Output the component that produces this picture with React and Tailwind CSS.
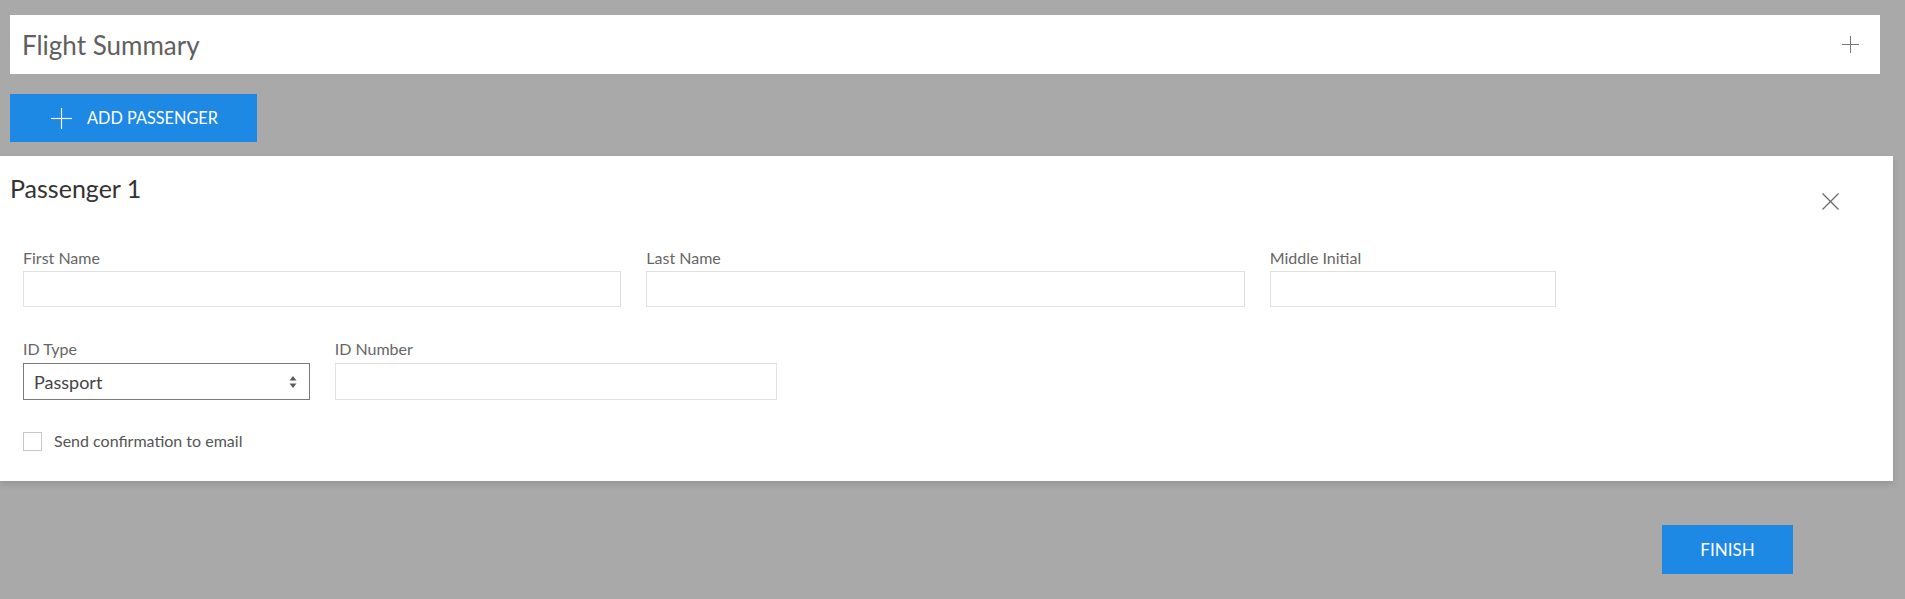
import React from "react";

function PlusIcon({ className, stroke = "currentColor", width = 1.2 }) {
  return (
    <svg viewBox="0 0 20 20" className={className} fill="none" stroke={stroke} strokeWidth={width}>
      <line x1="10" y1="0" x2="10" y2="20" />
      <line x1="0" y1="10" x2="20" y2="10" />
    </svg>
  );
}

function Field({ label, span, h = "h-[36px]" }) {
  return (
    <div className={span}>
      <div className="text-[16px] leading-[20px] text-[#666] mb-[3px]">{label}</div>
      <input
        type="text"
        className={`block w-full ${h} border border-[#e1e1e1] bg-white outline-none`}
      />
    </div>
  );
}

export default function App() {
  return (
    <div
      className="min-h-[599px] w-full bg-[#a9a9a9] pt-[15px]"
      style={{ fontFamily: "Lato, 'Open Sans', sans-serif" }}
    >
      <div className="ml-[10px] mr-[25px]">
        <div className="flex h-[59px] items-center justify-between bg-white pl-[12px] pr-[21px]">
          <span className="pt-[2px] text-[26px] leading-[31px] text-[#5f5f5f]">Flight Summary</span>
          <PlusIcon className="h-[17px] w-[17px] text-[#777]" />
        </div>
        <button className="mt-[20px] flex h-[48px] w-[247px] items-center gap-[15px] bg-[#1e88e5] pl-[41px] text-white">
          <PlusIcon className="h-[21px] w-[21px]" width={1.1} />
          <span className="text-[16.3px] leading-[20px]">ADD PASSENGER</span>
        </button>
      </div>

      <div className="mr-[12px] mt-[14px] bg-white pb-[30px] shadow-[0_3px_6px_rgba(0,0,0,0.12)]">
        <div className="flex items-start justify-between pl-[10px] pr-[54px] pt-[17px]">
          <span className="text-[25px] leading-[30px] text-[#333]">Passenger 1</span>
          <svg viewBox="0 0 17 17" className="mt-[20px] h-[17px] w-[17px]" fill="none" stroke="#6b6b6b" strokeWidth="1.2">
            <line x1="0.5" y1="0.5" x2="16.5" y2="16.5" />
            <line x1="16.5" y1="0.5" x2="0.5" y2="16.5" />
          </svg>
        </div>

        <div className="mt-[38px] pl-[23px] pr-[25px]">
          <div className="grid grid-cols-12 gap-x-[25px]">
            <Field label="First Name" span="col-span-4" />
            <Field label="Last Name" span="col-span-4" />
            <Field label="Middle Initial" span="col-span-2" />
          </div>

          <div className="mt-[32px] grid grid-cols-12 gap-x-[25px]">
            <div className="col-span-2">
              <div className="text-[16px] leading-[20px] text-[#666] mb-[4px]">ID Type</div>
              <div className="flex h-[37px] items-center justify-between border border-[#7a7a7a] bg-white pl-[10px] pr-[12px]">
                <span className="text-[18px] leading-[22px] text-[#444]">Passport</span>
                <svg viewBox="0 0 8 12" className="h-[12px] w-[8px]" fill="#5a5a5a">
                  <polygon points="4,0 7.5,4.5 0.5,4.5" />
                  <polygon points="0.5,7.5 7.5,7.5 4,12" />
                </svg>
              </div>
            </div>
            <div className="col-span-3">
              <div className="text-[16px] leading-[20px] text-[#666] mb-[4px]">ID Number</div>
              <input type="text" className="block h-[37px] w-full border border-[#e1e1e1] bg-white outline-none" />
            </div>
          </div>

          <label className="mt-[31px] flex items-center gap-[12px]">
            <span className="block h-[19px] w-[19px] border border-[#c9c9c9] bg-white" />
            <span className="text-[16px] leading-[20px] text-[#555]">Send confirmation to email</span>
          </label>
        </div>
      </div>

      <div className="mr-[112px] mt-[44px] flex justify-end">
        <button className="flex h-[49px] w-[131px] items-center justify-center bg-[#1e88e5] text-[17px] text-white">
          FINISH
        </button>
      </div>
    </div>
  );
}
